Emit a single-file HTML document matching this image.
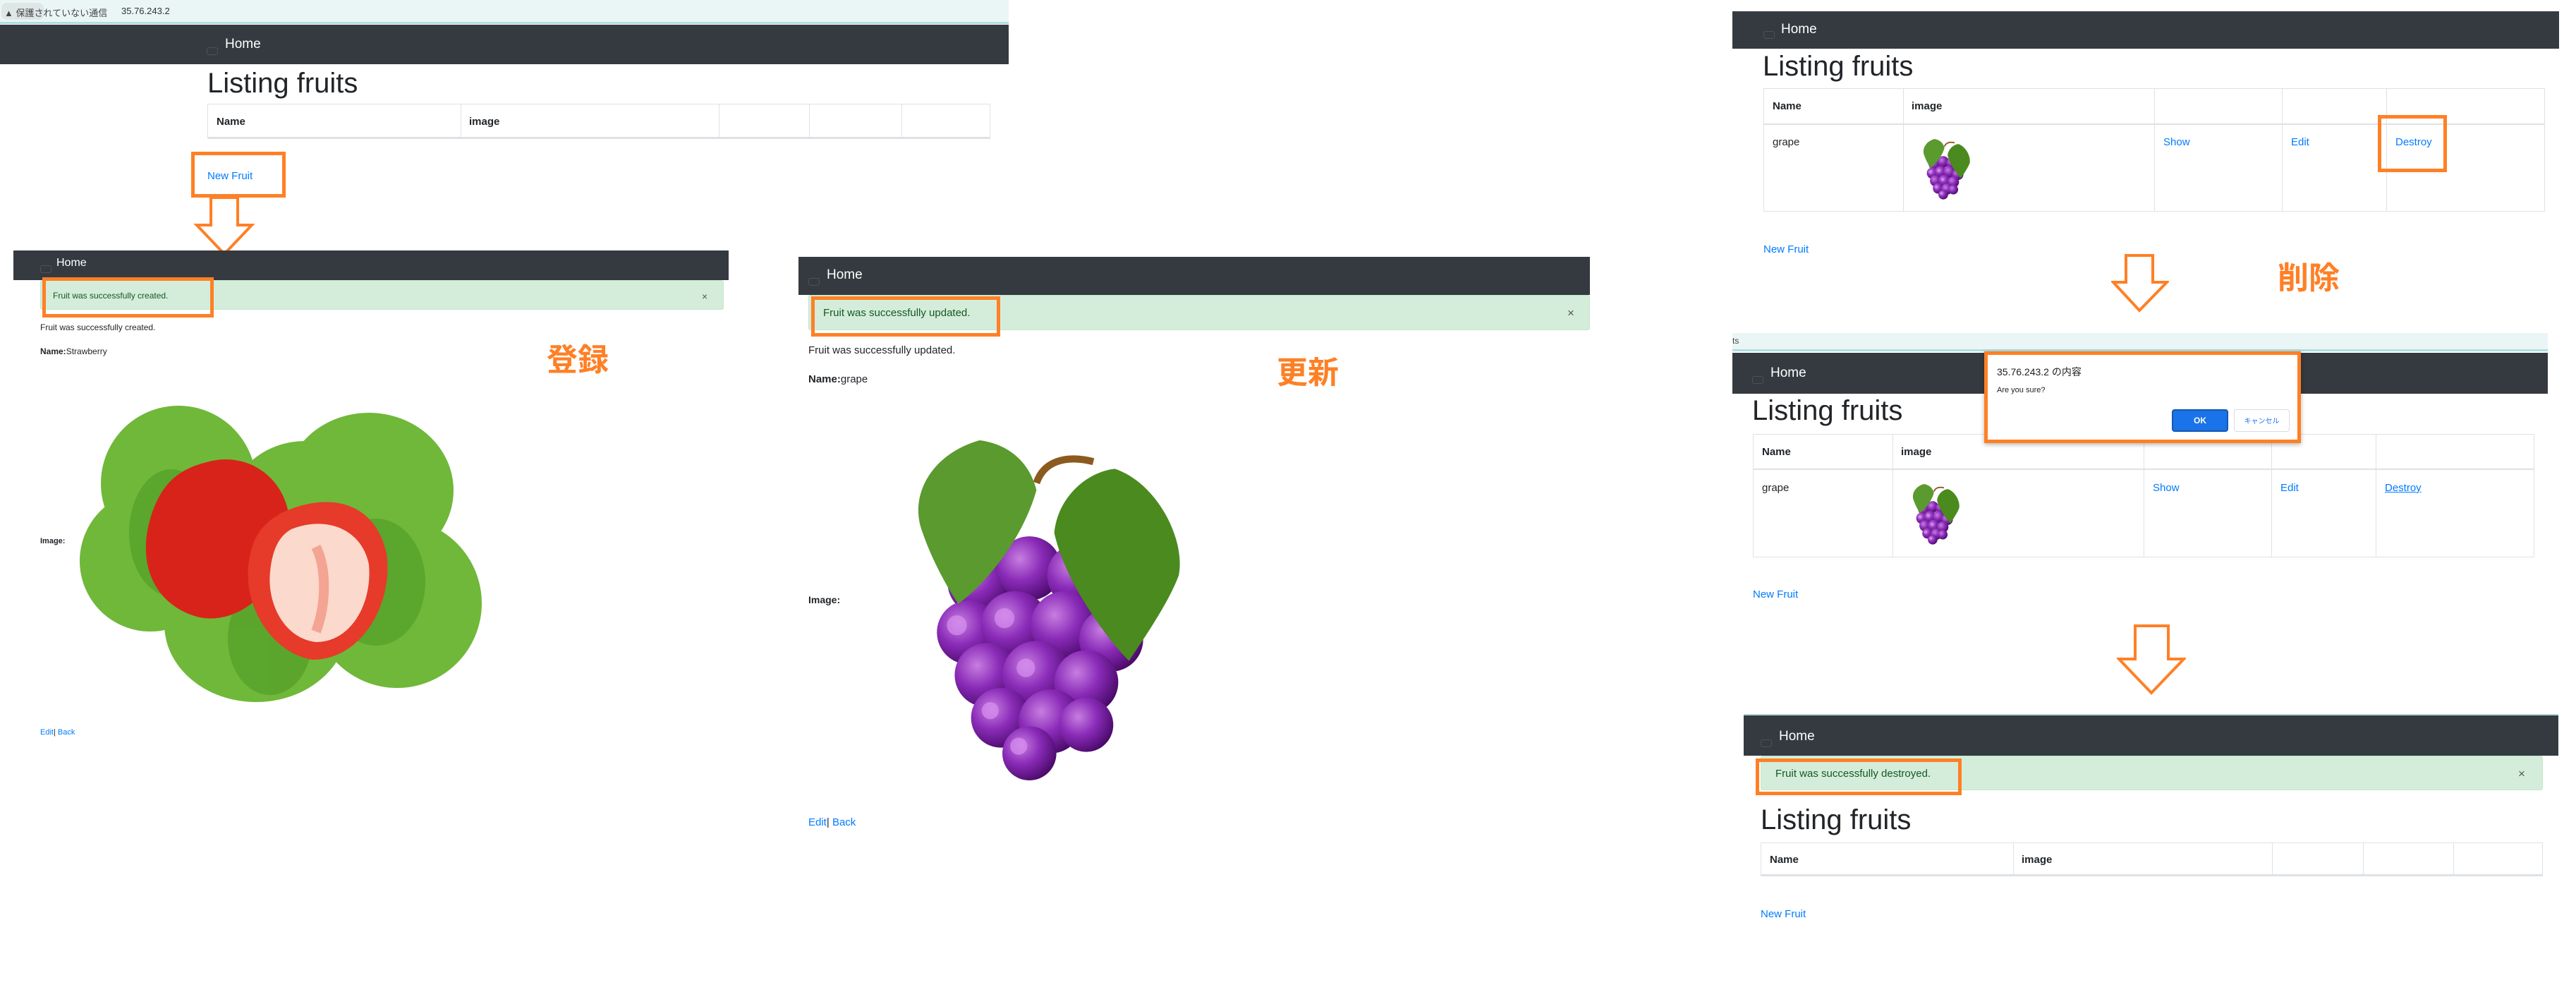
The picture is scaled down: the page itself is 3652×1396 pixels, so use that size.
<!DOCTYPE html>
<html><head><meta charset="utf-8">
<style>
*{margin:0;padding:0;box-sizing:border-box}
body{width:3652px;height:1396px;background:#fff;position:relative;overflow:hidden;font-family:"Liberation Sans","Noto Sans CJK JP",sans-serif;color:#212529}
.a{position:absolute}
.nav{position:absolute;background:#343a40}
.home{position:absolute;color:#fff;font-size:19px}
.tog{position:absolute;width:16px;height:11px;border:1px solid #4b5259;border-radius:3px}
.h1{position:absolute;font-size:40px;color:#212529;white-space:nowrap}
.alert{position:absolute;background:#d4edda;border:1px solid #c3e6cb;border-radius:3px;color:#155724}
.ob{position:absolute;border:5px solid #fe8026}
.lnk{color:#007bff}
.tbl{position:absolute;border:1px solid #dee2e6}
.vl{position:absolute;top:0;bottom:0;width:1px;background:#dee2e6}
.hl{position:absolute;left:0;right:0;height:2px;background:#dee2e6}
.t{position:absolute;white-space:nowrap}
.jp{position:absolute;color:#fe8026;font-weight:bold;font-size:44px;font-family:"Noto Sans CJK JP",sans-serif;line-height:1}
</style></head><body>
<svg width="0" height="0" style="position:absolute">
<defs>
<radialGradient id="gp" cx="35%" cy="35%" r="70%"><stop offset="0" stop-color="#c77ee0"/><stop offset=".5" stop-color="#8a2bb8"/><stop offset="1" stop-color="#4a0a6a"/></radialGradient>
<symbol id="grape" viewBox="0 0 400 480">
<path d="M190 60 C200 30 230 20 270 30" stroke="#8b5a1e" stroke-width="10" fill="none"/>
<g fill="url(#gp)">
<circle cx="110" cy="200" r="45"/><circle cx="180" cy="180" r="45"/><circle cx="250" cy="190" r="45"/><circle cx="310" cy="210" r="42"/>
<circle cx="95" cy="270" r="45"/><circle cx="160" cy="260" r="48"/><circle cx="230" cy="260" r="48"/><circle cx="295" cy="280" r="45"/>
<circle cx="120" cy="330" r="45"/><circle cx="190" cy="330" r="48"/><circle cx="260" cy="340" r="45"/>
<circle cx="140" cy="390" r="42"/><circle cx="210" cy="395" r="45"/><circle cx="260" cy="400" r="38"/>
<circle cx="180" cy="440" r="38"/>
</g>
<g fill="#d890f0" opacity=".7"><circle cx="95" cy="185" r="14"/><circle cx="78" cy="260" r="14"/><circle cx="145" cy="250" r="14"/><circle cx="175" cy="320" r="13"/><circle cx="165" cy="430" r="12"/><circle cx="125" cy="380" r="12"/></g>
<path d="M110 0 C40 20 10 80 30 130 C40 160 60 200 80 230 C120 200 170 140 190 70 C180 30 150 5 110 0Z" fill="#5a9a2e"/>
<path d="M300 40 C360 60 400 140 390 190 C375 230 340 280 320 310 C290 280 230 200 215 130 C220 80 260 45 300 40Z" fill="#4a8a1f"/>
</symbol>
</defs></svg>

<!-- Panel 1 -->
<div class="a" style="left:0;top:0;width:1430px;height:34px;background:#eaf6f6;border-bottom:3px solid #b0dde0"></div>
<div class="a" style="left:2px;top:4px;width:60px;height:24px;background:#dfe6e6;border-radius:8px"></div>
<div class="t" style="left:6px;top:8px;font-size:13px;color:#444">▲ 保護されていない通信</div>
<div class="t" style="left:172px;top:8px;font-size:13px;color:#333">35.76.243.2</div>
<div class="nav" style="left:0;top:35px;width:1430px;height:56px"></div>
<div class="tog" style="left:293px;top:67px"></div>
<div class="home" style="left:319px;top:52px">Home</div>
<div class="h1" style="left:294px;top:96px">Listing fruits</div>
<div class="tbl" style="left:294px;top:147px;width:1110px;height:50px">
<div class="vl" style="left:358px"></div><div class="vl" style="left:724px"></div><div class="vl" style="left:852px"></div><div class="vl" style="left:983px"></div>
<div class="hl" style="bottom:0"></div>
<div class="t" style="left:12px;top:16px;font-size:15px;font-weight:bold">Name</div>
<div class="t" style="left:370px;top:16px;font-size:15px;font-weight:bold">image</div>
</div>
<div class="ob" style="left:271px;top:215px;width:134px;height:65px"></div>
<div class="t lnk" style="left:294px;top:241px;font-size:15px">New Fruit</div>
<svg class="a" style="left:274px;top:278px" width="90" height="88"><path d="M25 2 H63 V41 H83 L44 82 L5 41 H25 Z" fill="#fff" stroke="#fe8026" stroke-width="4"/></svg>

<!-- Panel 2 strawberry -->
<div class="nav" style="left:19px;top:355px;width:1014px;height:42px"></div>
<div class="tog" style="left:57px;top:376px"></div>
<div class="home" style="left:80px;top:364px;font-size:16px">Home</div>
<div class="alert" style="left:57px;top:397px;width:969px;height:42px"></div>
<div class="t" style="left:75px;top:412px;font-size:12px;color:#155724">Fruit was successfully created.</div>
<div class="t" style="left:995px;top:412px;font-size:14px;color:#555">×</div>
<div class="ob" style="left:60px;top:393px;width:243px;height:57px"></div>
<div class="t" style="left:57px;top:457px;font-size:12px">Fruit was successfully created.</div>
<div class="t" style="left:57px;top:491px;font-size:12px"><b>Name:</b>Strawberry</div>
<div class="jp" style="left:775px;top:484px">登録</div>
<div class="t" style="left:57px;top:761px;font-size:11px;font-weight:bold">Image:</div>
<svg class="a" style="left:103px;top:525px" width="594" height="491" viewBox="0 0 594 491">
<g fill="#6fb83a">
<ellipse cx="150" cy="160" rx="110" ry="110"/><ellipse cx="110" cy="270" rx="100" ry="100"/><ellipse cx="420" cy="170" rx="120" ry="110"/>
<ellipse cx="260" cy="360" rx="130" ry="110"/><ellipse cx="460" cy="330" rx="120" ry="120"/><ellipse cx="330" cy="200" rx="110" ry="100"/>
</g>
<g fill="#4f9a25" opacity=".6"><ellipse cx="140" cy="230" rx="60" ry="90"/><ellipse cx="430" cy="300" rx="70" ry="90"/><ellipse cx="280" cy="380" rx="60" ry="80"/></g>
<path d="M190 130 C260 110 320 170 305 240 C290 320 230 360 180 350 C120 335 90 280 110 210 C125 160 150 140 190 130Z" fill="#d8231a"/>
<path d="M300 200 C370 170 430 190 445 260 C455 330 410 410 340 410 C280 400 240 330 250 270 C255 235 270 215 300 200Z" fill="#e63a2a"/>
<path d="M310 225 C360 205 410 225 420 275 C425 330 395 385 345 385 C300 380 275 330 280 285 C283 255 292 235 310 225Z" fill="#fbd9cc"/>
<path d="M345 250 C360 280 360 330 345 370" stroke="#f3a493" stroke-width="14" fill="none"/>
</svg>
<div class="t" style="left:57px;top:1032px;font-size:11px"><span class="lnk">Edit</span>| <span class="lnk">Back</span></div>

<!-- Panel 3 grape update -->
<div class="nav" style="left:1132px;top:364px;width:1122px;height:54px"></div>
<div class="tog" style="left:1146px;top:394px"></div>
<div class="home" style="left:1172px;top:379px">Home</div>
<div class="alert" style="left:1146px;top:418px;width:1108px;height:50px"></div>
<div class="t" style="left:1167px;top:435px;font-size:15px;color:#155724">Fruit was successfully updated.</div>
<div class="t" style="left:2222px;top:434px;font-size:17px;color:#555">×</div>
<div class="ob" style="left:1150px;top:420px;width:268px;height:57px"></div>
<div class="t" style="left:1146px;top:488px;font-size:15px">Fruit was successfully updated.</div>
<div class="t" style="left:1146px;top:529px;font-size:15px"><b>Name:</b>grape</div>
<div class="jp" style="left:1810px;top:502px">更新</div>
<div class="t" style="left:1146px;top:842px;font-size:14px;font-weight:bold">Image:</div>
<svg class="a" style="left:1276px;top:624px" width="407" height="484"><use href="#grape"/></svg>
<div class="t" style="left:1146px;top:1157px;font-size:15px"><span class="lnk">Edit</span>| <span class="lnk">Back</span></div>

<!-- Panel 4 right top -->
<div class="nav" style="left:2456px;top:16px;width:1172px;height:53px"></div>
<div class="tog" style="left:2500px;top:44px"></div>
<div class="home" style="left:2525px;top:31px">Home</div>
<div class="h1" style="left:2499px;top:72px">Listing fruits</div>
<div class="tbl" style="left:2500px;top:125px;width:1108px;height:175px">
<div class="vl" style="left:197px"></div><div class="vl" style="left:553px"></div><div class="vl" style="left:734px"></div><div class="vl" style="left:882px"></div>
<div class="hl" style="top:49px"></div>
<div class="t" style="left:12px;top:16px;font-size:15px;font-weight:bold">Name</div>
<div class="t" style="left:209px;top:16px;font-size:15px;font-weight:bold">image</div>
<div class="t" style="left:12px;top:67px;font-size:15px">grape</div>
<div class="t lnk" style="left:566px;top:67px;font-size:15px">Show</div>
<div class="t lnk" style="left:747px;top:67px;font-size:15px">Edit</div>
<div class="t lnk" style="left:895px;top:67px;font-size:15px">Destroy</div>
</div>
<svg class="a" style="left:2722px;top:197px" width="73" height="86"><use href="#grape"/></svg>
<div class="ob" style="left:3371px;top:163px;width:98px;height:81px"></div>
<div class="t lnk" style="left:2500px;top:345px;font-size:15px">New Fruit</div>
<svg class="a" style="left:2993px;top:360px" width="82" height="84"><path d="M21 2 H59 V40 H79 L40 80 L3 40 H21 Z" fill="#fff" stroke="#fe8026" stroke-width="4"/></svg>
<div class="jp" style="left:3229px;top:368px">削除</div>

<!-- Panel 5 dialog -->
<div class="a" style="left:2456px;top:472px;width:1156px;height:26px;background:#eaf6f6;border-bottom:3px solid #b0dde0"></div>
<div class="t" style="left:2456px;top:476px;font-size:12px;color:#444">ts</div>
<div class="nav" style="left:2456px;top:500px;width:1156px;height:58px"></div>
<div class="tog" style="left:2484px;top:533px"></div>
<div class="home" style="left:2510px;top:518px">Home</div>
<div class="h1" style="left:2484px;top:560px">Listing fruits</div>
<div class="tbl" style="left:2485px;top:615px;width:1108px;height:175px">
<div class="vl" style="left:197px"></div><div class="vl" style="left:553px"></div><div class="vl" style="left:734px"></div><div class="vl" style="left:882px"></div>
<div class="hl" style="top:48px"></div>
<div class="t" style="left:12px;top:16px;font-size:15px;font-weight:bold">Name</div>
<div class="t" style="left:209px;top:16px;font-size:15px;font-weight:bold">image</div>
<div class="t" style="left:12px;top:67px;font-size:15px">grape</div>
<div class="t lnk" style="left:566px;top:67px;font-size:15px">Show</div>
<div class="t lnk" style="left:747px;top:67px;font-size:15px">Edit</div>
<div class="t lnk" style="left:895px;top:67px;font-size:15px;text-decoration:underline">Destroy</div>
</div>
<svg class="a" style="left:2707px;top:686px" width="73" height="86"><use href="#grape"/></svg>
<div class="a" style="left:2813px;top:498px;width:449px;height:130px;background:#fff;border:5px solid #fe8026;box-shadow:0 2px 6px rgba(0,0,0,.3)"></div>
<div class="t" style="left:2831px;top:517px;font-size:14px;color:#202124">35.76.243.2 の内容</div>
<div class="t" style="left:2831px;top:547px;font-size:11px;color:#202124">Are you sure?</div>
<div class="a" style="left:3079px;top:580px;width:80px;height:32px;background:#1a73e8;border:2px solid #1558b0;border-radius:4px;color:#fff;font-size:12px;font-weight:bold;text-align:center;line-height:28px">OK</div>
<div class="a" style="left:3167px;top:580px;width:79px;height:32px;background:#fff;border:1px solid #dadce0;border-radius:4px;color:#1a73e8;font-size:10px;text-align:center;line-height:30px;font-family:'Noto Sans CJK JP',sans-serif">キャンセル</div>
<div class="t lnk" style="left:2485px;top:834px;font-size:15px">New Fruit</div>
<svg class="a" style="left:3001px;top:885px" width="98" height="102"><path d="M26 2 H73 V49 H95 L49 97 L3 49 H26 Z" fill="#fff" stroke="#fe8026" stroke-width="4"/></svg>

<!-- Panel 6 -->
<div class="nav" style="left:2472px;top:1012px;width:1155px;height:59px;border-top:2px solid #a9d3d6"></div>
<div class="tog" style="left:2496px;top:1048px"></div>
<div class="home" style="left:2522px;top:1033px">Home</div>
<div class="alert" style="left:2496px;top:1071px;width:1109px;height:49px"></div>
<div class="t" style="left:2517px;top:1088px;font-size:15px;color:#155724">Fruit was successfully destroyed.</div>
<div class="t" style="left:3570px;top:1087px;font-size:17px;color:#555">×</div>
<div class="ob" style="left:2489px;top:1075px;width:292px;height:52px"></div>
<div class="h1" style="left:2496px;top:1140px">Listing fruits</div>
<div class="tbl" style="left:2496px;top:1194px;width:1109px;height:48px">
<div class="vl" style="left:357px"></div><div class="vl" style="left:724px"></div><div class="vl" style="left:853px"></div><div class="vl" style="left:981px"></div>
<div class="hl" style="bottom:0"></div>
<div class="t" style="left:12px;top:15px;font-size:15px;font-weight:bold">Name</div>
<div class="t" style="left:369px;top:15px;font-size:15px;font-weight:bold">image</div>
</div>
<div class="t lnk" style="left:2496px;top:1287px;font-size:15px">New Fruit</div>
</body></html>
